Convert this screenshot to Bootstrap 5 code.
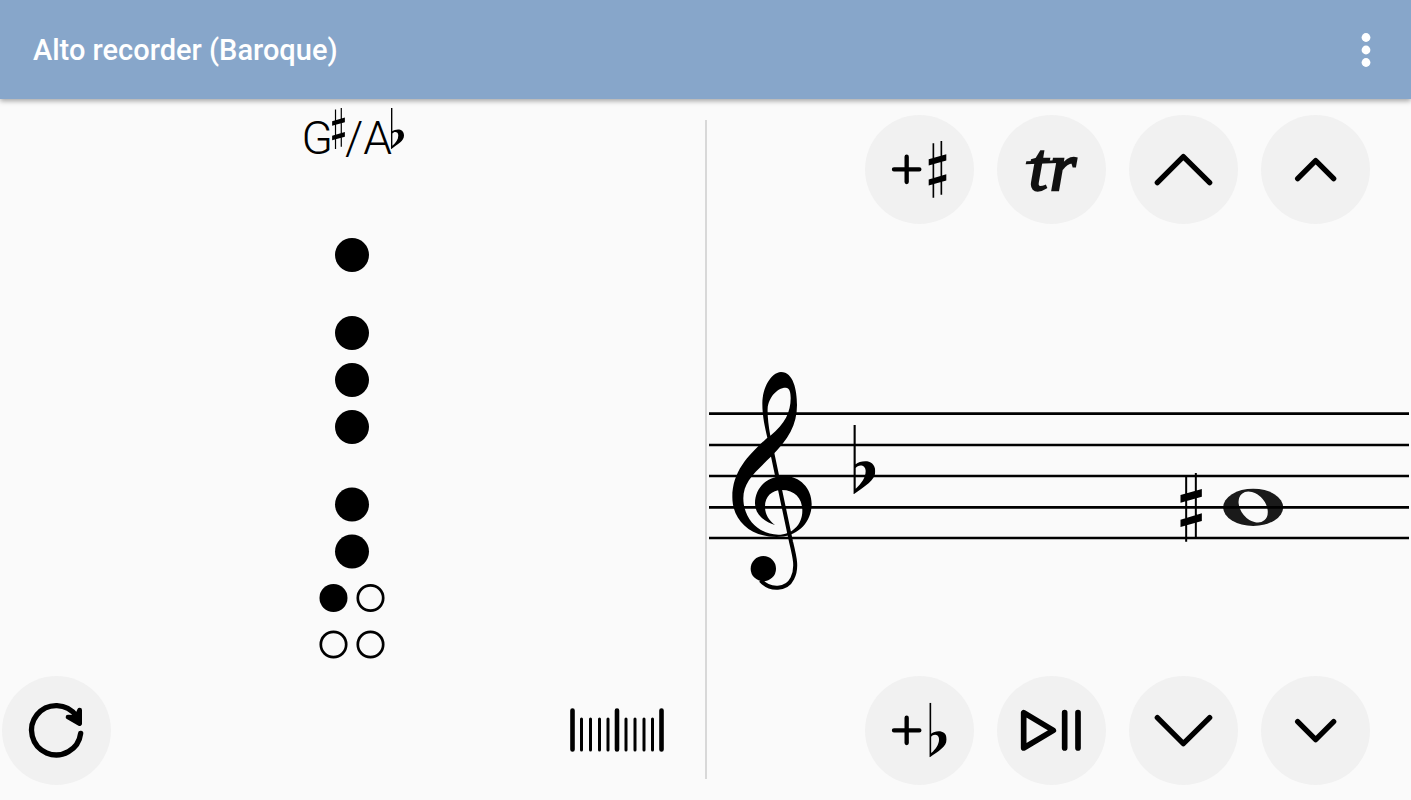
<!DOCTYPE html>
<html lang="en">
<head>
<meta charset="utf-8">
<meta name="viewport" content="width=device-width, initial-scale=1">
<title>Alto recorder (Baroque)</title>
<link href="https://cdn.jsdelivr.net/npm/bootstrap@5.3.0/dist/css/bootstrap.min.css" rel="stylesheet">
<style>
  body { background: #fafafa; color: #000; font-family: Roboto, sans-serif; }
  .app-bar { background: #87a6ca; height: 99px; padding: 0 33px; box-shadow: 0 2px 5px rgba(0, 0, 0, .35); z-index: 1; }
  .app-title { font-size: 29px; font-weight: 500; line-height: 36px; color: #fff; }
  .pane { flex: 1 1 0; min-width: 0; padding: 16px 0 15px; }
  .divider { width: 2px; margin: 21px 0; background: #d8d8d8; }
  .note-name { font-size: 46px; font-weight: 300; line-height: 46px; padding-left: 1px; }
  .accidental { height: 41px; margin: -7px 0 0 -1px; }
  .fingering { padding-top: 58px; }
  .round-btn { width: 109px; height: 109px; border-radius: 50%; background: #f1f1f1; }
  .round-btn:hover, .round-btn:active { background: #e6e6e6 !important; }
  .controls { gap: 23px; padding-right: 41px; }
  .reset { margin-left: 2px; }
  .scale-btn { margin-right: 41px; }
  .staff-area { padding: 60px 2px 0 2px; }
  .trill { font: italic 204px "Liberation Serif", serif; stroke: #111; stroke-width: 7px; }
  svg { display: block; }
</style>
</head>
<body class="d-flex flex-column min-vh-100">
<svg width="0" height="0" class="position-absolute" aria-hidden="true">
  <symbol id="sharp" viewBox="0 0 64 206" overflow="visible">
    <path d="M14 8h6v198h-6zM43 0h6v195h-6zM0 66L64 48V71L0 89zM0 140L64 121V144L0 162z"/>
  </symbol>
  <symbol id="flat" viewBox="0 0 66 208">
    <path fill-rule="evenodd" d="M0 0H7V118C22 106 66 100 66 140C66 168 34 184 2 208H0zM7 130V192C24 177 37 159 37 139C37 118 14 118 7 130z"/>
  </symbol>
</svg>

<header class="app-bar d-flex align-items-center justify-content-between position-relative">
  <h1 class="app-title m-0">Alto recorder (Baroque)</h1>
  <button type="button" class="btn border-0 p-0" aria-label="More options">
    <svg width="24" height="36" viewBox="0 0 24 36" fill="#fff"><circle cx="12" cy="5.500" r="4.400"/><circle cx="12" cy="18" r="4.400"/><circle cx="12" cy="30.500" r="4.400"/></svg>
  </button>
</header>

<main class="d-flex flex-grow-1">
  <section class="pane d-flex flex-column justify-content-between" aria-label="Fingering">
    <h2 class="note-name d-flex justify-content-center m-0">
      <span>G</span><svg class="accidental" width="13" role="img" aria-label="sharp"><use href="#sharp"/></svg><span>/</span><span>A</span><svg class="accidental" width="13" role="img" aria-label="flat"><use href="#flat"/></svg>
    </h2>
    <div class="fingering">
    <svg class="mx-auto" width="68" height="424" viewBox="0 0 68 424" role="img" aria-label="Hole pattern">
      <g><circle cx="34" cy="19" r="17"/><circle cx="34" cy="97" r="17"/><circle cx="34" cy="144" r="17"/><circle cx="34" cy="191" r="17"/><circle cx="34" cy="268.500" r="17"/><circle cx="34" cy="315.500" r="17"/><circle cx="15.500" cy="362" r="14"/></g>
      <g fill="none" stroke="#000" stroke-width="2.700"><circle cx="52.500" cy="362" r="12.700"/><circle cx="15.500" cy="408.500" r="12.700"/><circle cx="52.500" cy="408.500" r="12.700"/></g>
    </svg>
    </div>
    <div class="d-flex align-items-center justify-content-between">
      <button type="button" class="btn round-btn reset border-0 p-0" aria-label="Reset">
        <svg width="109" height="109" viewBox="6 31 327 327" fill="none" stroke="#000" stroke-width="16" stroke-linecap="round" stroke-linejoin="round"><path d="M242 203A74 74 0 1 1 229 151"/><path fill="#000" d="M204 154L239 174V133L229 155z" stroke-width="14"/></svg>
      </button>
      <button type="button" class="btn scale-btn border-0 p-0" aria-label="Range">
        <svg width="94" height="46" viewBox="0 0 94 46" stroke="#000" stroke-linecap="round"><path stroke-width="4.600" d="M2.500 2.500V41.500M47 2.500V41.500M91.500 2.500V41.500"/><path stroke-width="3" d="M11.500 11V42M20.500 11V42M29.500 11V42M38 11V42M56 11V42M65 11V42M74 11V42M82.500 11V42"/></svg>
      </button>
    </div>
  </section>

  <div class="divider" role="separator"></div>

  <section class="pane d-flex flex-column justify-content-between" aria-label="Notation">
    <div class="controls d-flex justify-content-end">
      <button type="button" class="btn round-btn border-0 p-0" aria-label="Add sharp">
        <svg width="109" height="109" viewBox="15 29 327 327"><path d="M102 192H178M140 154V230" stroke="#000" stroke-width="13" stroke-linecap="round"/><use href="#sharp" x="206" y="107" width="53" height="170"/></svg>
      </button>
      <button type="button" class="btn round-btn border-0 p-0" aria-label="Trill">
        <svg width="109" height="109" viewBox="410 28 327 327" fill="#111"><text class="trill" x="505 568" y="252">tr</text><path d="M498 167L592 164V172L496 176z"/></svg>
      </button>
      <button type="button" class="btn round-btn border-0 p-0" aria-label="Octave up">
        <svg width="109" height="109" viewBox="28 28 327 327" fill="none" stroke="#000" stroke-width="16" stroke-linecap="round" stroke-linejoin="round"><path d="M113 231L191 153L270 231"/></svg>
      </button>
      <button type="button" class="btn round-btn border-0 p-0" aria-label="Note up">
        <svg width="109" height="109" viewBox="425 28 327 327" fill="none" stroke="#000" stroke-width="16" stroke-linecap="round" stroke-linejoin="round"><path d="M535 219L589 165L643 219"/></svg>
      </button>
    </div>

    <div class="staff-area">
      <svg width="100%" height="240" role="img" aria-label="Treble staff with one flat and a G sharp whole note">
        <g transform="scale(.33333) translate(-27 0)">
          <path fill-rule="evenodd" d="M243 36C212 38 187 85 187 130C187 170 195 203 202 233C150 282 97 330 97 412C97 480 150 531 230 531C295 531 335 485 335 432C335 385 300 348 252 348C200 348 165 385 165 430C165 465 195 486 225 495C205 480 195 462 195 440C195 410 215 390 245 390C285 390 307 415 307 452C307 495 275 524 235 524C175 524 130 475 130 415C130 365 165 337 215 288C265 238 291 195 291 135C291 90 280 36 243 36zM257 83C270 83 272 100 272 115C272 155 255 193 211 227C205 195 202 165 203 145C205 115 230 83 257 83z"/>
          <path fill="none" stroke="#000" stroke-width="12" d="M216 275L273 545C284 590 293 625 277 655C260 690 210 693 182 661"/>
          <circle cx="190" cy="626" r="38"/>
          <use href="#flat" x="460" y="195" width="66" height="207"/>
        </g>
        <svg x="100%" overflow="visible">
          <g transform="translate(-250 100) scale(.33333)">
            <use href="#sharp" x="63" y="39" width="64" height="206"/>
            <ellipse cx="281" cy="142" rx="90" ry="56" fill="#1a1a1a"/>
            <ellipse cx="281" cy="141" rx="52" ry="37" fill="#fafafa" transform="rotate(50 281 141)"/>
          </g>
        </svg>
        <g stroke="#000" stroke-width="2.700"><line x2="100%" y1="53.700" y2="53.700"/><line x2="100%" y1="85" y2="85"/><line x2="100%" y1="116" y2="116"/><line x2="100%" y1="147.300" y2="147.300"/><line x2="100%" y1="178" y2="178"/></g>
      </svg>
    </div>

    <div class="controls d-flex justify-content-end">
      <button type="button" class="btn round-btn border-0 p-0" aria-label="Add flat">
        <svg width="109" height="109" viewBox="15 17 327 327"><path d="M102 180H178M140 142V218" stroke="#000" stroke-width="13" stroke-linecap="round"/><use href="#flat" x="208" y="97" width="52" height="164"/></svg>
      </button>
      <button type="button" class="btn round-btn border-0 p-0" aria-label="Play or pause">
        <svg width="109" height="109" viewBox="411 17 327 327" fill="none" stroke="#000" stroke-width="17" stroke-linecap="round" stroke-linejoin="round"><path d="M491 127V233L580 180zM614 127V233M654 127V233"/></svg>
      </button>
      <button type="button" class="btn round-btn border-0 p-0" aria-label="Octave down">
        <svg width="109" height="109" viewBox="28 16 327 327" fill="none" stroke="#000" stroke-width="16" stroke-linecap="round" stroke-linejoin="round"><path d="M113 141L191 219L270 141"/></svg>
      </button>
      <button type="button" class="btn round-btn border-0 p-0" aria-label="Note down">
        <svg width="109" height="109" viewBox="425 16 327 327" fill="none" stroke="#000" stroke-width="16" stroke-linecap="round" stroke-linejoin="round"><path d="M535 153L589 207L643 153"/></svg>
      </button>
    </div>
  </section>
</main>
<script src="https://cdn.jsdelivr.net/npm/bootstrap@5.3.0/dist/js/bootstrap.bundle.min.js"></script>
</body>
</html>
